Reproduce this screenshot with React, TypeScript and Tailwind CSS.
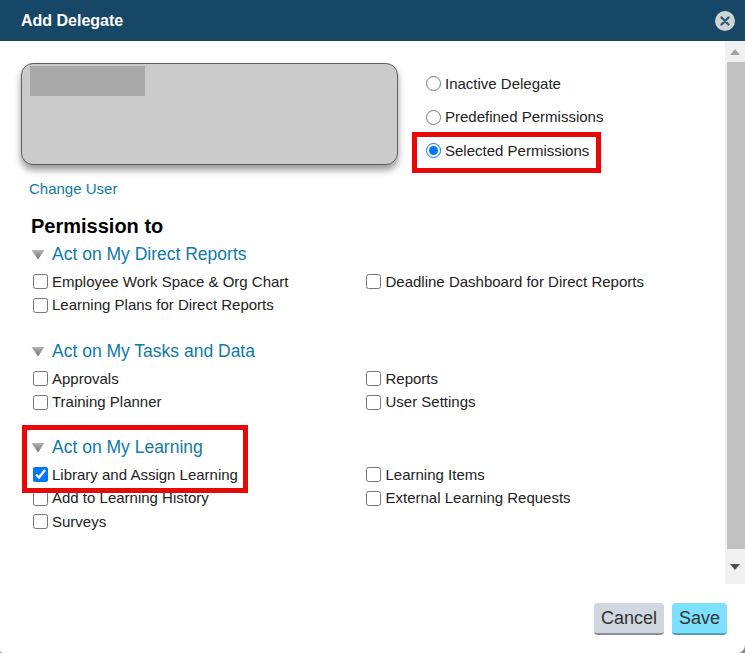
const font = { fontFamily: '"Liberation Sans", Arial, sans-serif' };

function Tri() {
  return (
    <svg width="14" height="11" viewBox="0 0 14 11" className="shrink-0">
      <defs>
        <linearGradient id="tg" x1="0" y1="0" x2="0" y2="1">
          <stop offset="0" stopColor="#b5b5b5" />
          <stop offset="1" stopColor="#6f6f6f" />
        </linearGradient>
      </defs>
      <path d="M0.5 1 H13.5 L7 10.5 Z" fill="url(#tg)" />
    </svg>
  );
}

function Check({ label, checked, wide }: { label: string; checked?: boolean; wide?: boolean }) {
  return (
    <label className="flex items-center h-[23.5px] text-[15px] text-[#222]">
      <input
        type="checkbox"
        defaultChecked={checked}
        className={wide ? "w-[15px] h-[15px] m-0 ml-[33px] mr-[4.5px]" : "w-[15px] h-[15px] m-0 ml-[33px] mr-[4px]"}
      />
      <span>{label}</span>
    </label>
  );
}

function Group({ title, items, className }: { title: string; items: [string, string?][]; className: string }) {
  return (
    <div className={className}>
      <div className="flex items-center h-[24px] pl-[31px] gap-[7px]">
        <Tri />
        <span className="text-[17.5px] text-[#0f7aa5]">{title}</span>
      </div>
      <div className="mt-[4px] flex flex-col">
        {items.map(([a, b]) => (
          <div key={a} className="grid grid-cols-[366px_1fr]">
            <Check label={a} checked={a === "Library and Assign Learning"} />
            {b ? <div className="-ml-[33px]"><Check label={b} wide /></div> : <div />}
          </div>
        ))}
      </div>
    </div>
  );
}

function Radio({ label, checked }: { label: string; checked?: boolean }) {
  return (
    <label className="flex items-center h-[33.5px] text-[15px] text-[#222]">
      <input type="radio" name="perm" defaultChecked={checked} className="w-[15px] h-[15px] m-0 mr-[4px]" />
      <span>{label}</span>
    </label>
  );
}

export default function App() {
  return (
    <div style={font} className="w-[745px] h-[653px] bg-[#8a8a8a] overflow-hidden">
      <div className="relative w-full h-full bg-white rounded-br-[8px] rounded-bl-[3px] flex flex-col overflow-hidden">
        <header className="h-[41px] shrink-0 bg-[#174766] flex items-center justify-between pl-[21px] pr-[10px]">
          <span className="text-white font-bold text-[16px]">Add Delegate</span>
          <span className="w-[20px] h-[20px] rounded-full bg-[#d0d3d3] flex items-center justify-center">
            <svg width="10" height="10" viewBox="0 0 10 10">
              <path d="M1.5 1.5 L8.5 8.5 M8.5 1.5 L1.5 8.5" stroke="#2f5a78" strokeWidth="2.4" strokeLinecap="round" />
            </svg>
          </span>
        </header>

        <div className="h-[543px] shrink-0 flex">
          <main className="relative w-[725px] shrink-0">
            <div className="flex">
              <div className="ml-[21px] mt-[22px] w-[377px] h-[102px] rounded-[12px] border border-[#5f5f5f] bg-[#cbcbcb] shadow-[0_5px_7px_rgba(0,0,0,0.4)] pl-[8px] pt-[2px]">
                <div className="w-[115px] h-[30px] bg-[#a9a9a9]" />
              </div>
              <div className="ml-[28px] mt-[26px] flex flex-col">
                <Radio label="Inactive Delegate" />
                <Radio label="Predefined Permissions" />
                <Radio label="Selected Permissions" checked />
              </div>
            </div>
            <div className="ml-[29px] mt-[10px] text-[15px] text-[#0f7aa5]">Change User</div>
            <div className="ml-[31px] mt-[14px] text-[20px] font-bold text-black leading-[24px]">Permission to</div>
            <Group
              className="mt-[4px]"
              title="Act on My Direct Reports"
              items={[
                ["Employee Work Space & Org Chart", "Deadline Dashboard for Direct Reports"],
                ["Learning Plans for Direct Reports"],
              ]}
            />
            <Group
              className="mt-[22px]"
              title="Act on My Tasks and Data"
              items={[
                ["Approvals", "Reports"],
                ["Training Planner", "User Settings"],
              ]}
            />
            <Group
              className="mt-[21px]"
              title="Act on My Learning"
              items={[
                ["Library and Assign Learning", "Learning Items"],
                ["Add to Learning History", "External Learning Requests"],
                ["Surveys"],
              ]}
            />
            <div className="absolute left-[412px] top-[91px] w-[189px] h-[41px] border-[5px] border-[#e80808]" />
            <div className="absolute left-[22px] top-[384px] w-[226px] h-[68px] border-[5px] border-[#e80808]" />
          </main>
          <aside className="w-[20px] bg-[#f1f1f1] flex flex-col items-center">
            <div className="h-[21px] flex items-center justify-center">
              <svg width="10" height="6" viewBox="0 0 10 6"><path d="M0 6 L5 0 L10 6 Z" fill="#a3a3a3" /></svg>
            </div>
            <div className="ml-[2px] w-[18px] h-[487px] bg-[#c1c1c1]" />
            <div className="flex-1 flex items-center justify-center">
              <svg width="10" height="6" viewBox="0 0 10 6"><path d="M0 0 L10 0 L5 6 Z" fill="#505050" /></svg>
            </div>
          </aside>
        </div>

        <footer className="flex justify-end gap-[8px] pr-[18px] pt-[19px]">
          <button className="w-[70px] h-[32px] rounded-[4px] bg-[#d0d7de] border-b-2 border-[#8a9096] text-[18px] text-[#333]">Cancel</button>
          <button className="w-[55px] h-[32px] rounded-[4px] bg-[#7ee0ff] border-b-2 border-[#4ba3bd] text-[18px] text-[#333]">Save</button>
        </footer>
      </div>
    </div>
  );
}
